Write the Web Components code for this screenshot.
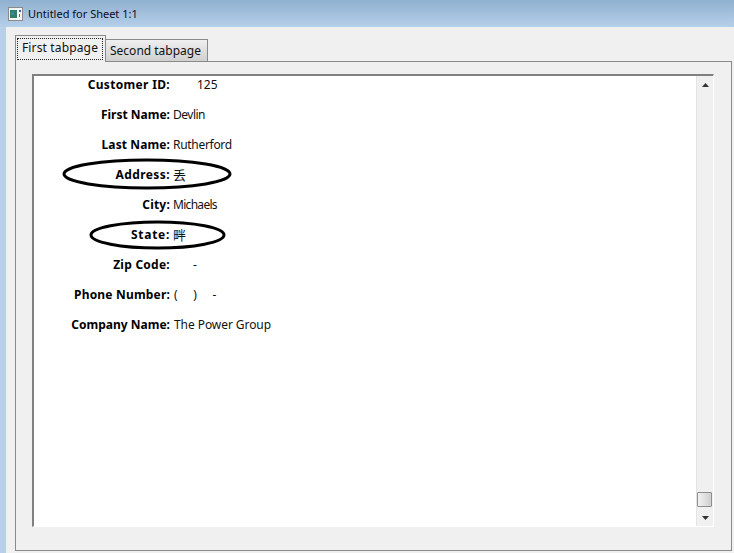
<!DOCTYPE html>
<html><head><meta charset="utf-8">
<style>
html,body{margin:0;padding:0;height:100%;overflow:hidden;background:#f0f0f0}
</style></head><body>
<app-window title="Untitled for Sheet 1:1">
  <tab-strip></tab-strip>
  <tab-panel>
    <record-row label="Customer ID:" value="125" indent="24" ls=".33"></record-row>
    <record-row label="First Name:" value="Devlin" vs="-.5"></record-row>
    <record-row label="Last Name:" value="Rutherford" ls=".1" vs="-.3"></record-row>
    <record-row label="Address:" value="<span style='font-size:13px'>丢</span>" ls=".4" ring="170,32,28,-8"></record-row>
    <record-row label="City:" value="Michaels" ls=".2" vs="-.7"></record-row>
    <record-row label="State:" value="<span style='font-size:13px'>畔</span>" ls=".7" ring="137,30,55,-6"></record-row>
    <record-row label="Zip Code:" value="-" indent="20" ls=".25"></record-row>
    <record-row label="Phone Number:" value="(&nbsp;&nbsp;&nbsp;&nbsp;&nbsp;)&nbsp;&nbsp;&nbsp;&nbsp;&nbsp;-" indent="1" ls=".18"></record-row>
    <record-row label="Company Name:" value="The Power Group" indent="1" vs="-.07"></record-row>
  </tab-panel>
</app-window>
<script>
const FONT='"Noto Sans","Noto Sans CJK SC",sans-serif';
class AppWindow extends HTMLElement{
  constructor(){super();const s=this.attachShadow({mode:'open'});
  s.innerHTML=`<style>
  :host{display:flex;flex-direction:column;width:734px;height:553px;background:#b9d0e9;font-family:${FONT}}
  .bar{height:27px;flex:none;display:flex;align-items:center;gap:5px;padding-left:8px;box-sizing:border-box;
    background:linear-gradient(180deg,#8fb0cf 0%,#a3c0dd 50%,#b6cfe9 100%);font-size:11px;color:#0c0c1c}
  .body{flex:1;margin-left:6px;background:#f0f0f0;padding:8px 2px 2px 9px;display:flex;flex-direction:column;min-height:0}
  svg{display:block}
  </style>
  <div class="bar"><svg width="15" height="14" viewBox="0 0 15 14"><rect x=".5" y=".5" width="14" height="13" fill="#f4f4f4" stroke="#8a8a8a"/><rect x="2" y="3" width="7" height="8" fill="#2f7d6a"/><rect x="3" y="5" width="3" height="3" fill="#3f7fc0"/><rect x="11" y="3" width="2" height="2" fill="#3a62b0"/><rect x="11" y="7" width="1" height="3" fill="#666"/></svg><span id="t"></span></div>
  <div class="body"><slot></slot></div>`;
  s.getElementById('t').textContent=this.getAttribute('title');this.removeAttribute('title');}
}
class TabStrip extends HTMLElement{
  constructor(){super();const s=this.attachShadow({mode:'open'});
  s.innerHTML=`<style>
  :host{display:flex;align-items:flex-end;height:27px;flex:none;position:relative;z-index:1;margin-bottom:-1px;font-size:12px;color:#111}
  .tab{box-sizing:border-box;border:1px solid #8a8a8a;display:flex;align-items:center;justify-content:center}
  .a{width:91px;height:27px;background:#f0f0f0;border-bottom:0;padding:2px 2px 2px 1px;align-items:flex-start}
  .a span{display:block;width:100%;height:22px;box-sizing:border-box;border:1px dotted #222;text-align:center;line-height:18px;letter-spacing:.15px}
  .b{width:103px;height:23px;margin-left:-1px;padding:0 2px 1px 0;background:linear-gradient(180deg,#efefef,#d0d0d0)}
  </style><div class="tab a"><span>First tabpage</span></div><div class="tab b">Second tabpage</div>`;}
}
class TabPanel extends HTMLElement{
  constructor(){super();const s=this.attachShadow({mode:'open'});
  s.innerHTML=`<style>
  :host{display:flex;flex:1;min-height:0;box-sizing:border-box;border:1px solid #8a8a8a;padding:12px 17px 23px 16px;background:#f0f0f0}
  .frame{flex:1;display:flex;min-width:0;background:#fff;border:2px solid #808080;border-right:1px solid #fff;border-bottom:1px solid #fff}
  .rows{flex:1;display:flex;flex-direction:column;min-width:0}
  .sb{width:17px;flex:none;background:#f0f0f0;display:flex;flex-direction:column;align-items:flex-start;box-sizing:border-box;border-left:1px solid #e4e4e4}
  .up,.dn{height:17px;flex:none;display:flex;align-items:center;justify-content:center;width:100%}
  .gap{flex:1}
  .thumb{width:15px;height:15px;box-sizing:border-box;border:1px solid #8e8e8e;border-radius:1px;background:linear-gradient(90deg,#f2f2f2,#cfcfcf);margin:0 0 2px 0;flex:none}
  </style>
  <div class="frame"><div class="rows"><slot></slot></div>
  <div class="sb"><div class="up"><svg width="7" height="4" viewBox="0 0 7 4"><path d="M3.5 0L7 4H0z" fill="#333"/></svg></div><div class="gap"></div><div class="thumb"></div><div class="dn"><svg width="7" height="4" viewBox="0 0 7 4"><path d="M0 0H7L3.5 4z" fill="#333"/></svg></div></div></div>`;}
}
class RecordRow extends HTMLElement{
  constructor(){super();const s=this.attachShadow({mode:'open'});
  const ring=this.getAttribute('ring');let r='';
  if(ring){const [w,h,x,y]=ring.split(',').map(Number);
   r=`<svg class="ring" style="left:${x}px;top:${y}px" width="${w}" height="${h}" viewBox="0 0 ${w} ${h}"><ellipse cx="${w/2}" cy="${h/2}" rx="${w/2-2}" ry="${h/2-2}" fill="none" stroke="#000" stroke-width="3"/></svg>`;}
  s.innerHTML=`<style>
  :host{display:flex;height:30px;flex:none;font-size:12px;color:#111;position:relative}
  .row{display:flex;height:16px;align-items:center;width:100%}
  .l{width:136px;flex:none;text-align:right;font-weight:700;white-space:nowrap;color:#000}
  .v{white-space:nowrap}
  .ring{position:absolute}
  </style><div class="row"><div class="l"></div><div class="v"></div></div>${r}`;
  const l=s.querySelector('.l');l.textContent=this.getAttribute('label');
  l.style.letterSpacing=(this.getAttribute('ls')||0)+'px';
  const v=s.querySelector('.v');v.innerHTML=this.getAttribute('value');
  v.style.letterSpacing=(this.getAttribute('vs')||0)+'px';
  v.style.paddingLeft=(3+Number(this.getAttribute('indent')||0))+'px';}
}
customElements.define('app-window',AppWindow);
customElements.define('tab-strip',TabStrip);
customElements.define('tab-panel',TabPanel);
customElements.define('record-row',RecordRow);
</script>
</body></html>
